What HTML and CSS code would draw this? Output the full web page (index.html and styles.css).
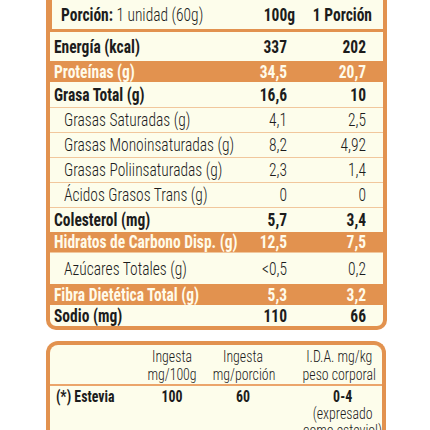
FILE: index.html
```html
<!DOCTYPE html>
<html lang="es">
<head>
  <meta charset="UTF-8">
  <title>Información Nutricional</title>
  <link rel="stylesheet" href="styles.css">
</head>
<body>

<div class="tabla">
  <div class="fila cabecera">
    <div><strong>Porción:</strong> 1 unidad (60g)</div>
    <div class="num">100g</div>
    <div class="num">1 Porción</div>
  </div>

  <div class="fila negrita alta">
    <div>Energía (kcal)</div><div class="num">337</div><div class="num">202</div>
  </div>
  <div class="fila naranja">
    <div>Proteínas (g)</div><div class="num">34,5</div><div class="num">20,7</div>
  </div>
  <div class="fila negrita">
    <div>Grasa Total (g)</div><div class="num">16,6</div><div class="num">10</div>
  </div>
  <div class="fila sub">
    <div>Grasas Saturadas (g)</div><div class="num">4,1</div><div class="num">2,5</div>
  </div>
  <div class="fila sub">
    <div>Grasas Monoinsaturadas (g)</div><div class="num">8,2</div><div class="num">4,92</div>
  </div>
  <div class="fila sub">
    <div>Grasas Poliinsaturadas (g)</div><div class="num">2,3</div><div class="num">1,4</div>
  </div>
  <div class="fila sub">
    <div>Ácidos Grasos Trans (g)</div><div class="num">0</div><div class="num">0</div>
  </div>
  <div class="fila negrita">
    <div>Colesterol (mg)</div><div class="num">5,7</div><div class="num">3,4</div>
  </div>
  <div class="fila naranja baja">
    <div>Hidratos de Carbono Disp. (g)</div><div class="num">12,5</div><div class="num">7,5</div>
  </div>
  <div class="fila sub ancha">
    <div>Azúcares Totales (g)</div><div class="num">&lt;0,5</div><div class="num">0,2</div>
  </div>
  <div class="fila naranja">
    <div>Fibra Dietética Total (g)</div><div class="num">5,3</div><div class="num">3,2</div>
  </div>
  <div class="fila negrita ultima">
    <div>Sodio (mg)</div><div class="num">110</div><div class="num">66</div>
  </div>
</div>

<div class="edulcorante">
  <div class="ed-cabecera">
    <div></div>
    <div>Ingesta<br>mg/100g</div>
    <div>Ingesta<br>mg/porción</div>
    <div class="ida">I.D.A. mg/kg<br>peso corporal</div>
  </div>
  <div class="ed-fila">
    <div class="nombre">(*) Estevia</div>
    <div><strong>100</strong></div>
    <div><strong>60</strong></div>
    <div class="ida"><strong>0-4</strong><br>(expresado<br>como esteviol)</div>
  </div>
</div>

</body>
</html>
```
FILE: styles.css
```css
* {
  box-sizing: border-box;
}
html {
  overflow: hidden;
}
body {
  margin: 0;
  background: #ffffff;
  font-family: "Roboto", "Liberation Sans", sans-serif;
  font-stretch: condensed;
  font-size: 18px;
  font-weight: 300;
  color: #1c1c1c;
}
strong {
  font-weight: 700;
}

/* tabla nutricional */
.tabla {
  margin: -6px 0 0 46px;
  width: 341px;
  border: 4px solid #e2924f;
  border-radius: 0 0 10px 10px;
  background-color: #fdfdeb;
  overflow: hidden;
}
.fila {
  display: grid;
  grid-template-columns: minmax(0, 1fr) 60px 79px;
  align-items: center;
  height: 25px;
  padding: 0 17px 0 4px;
  white-space: nowrap;
}
/* letra condensada */
.fila > div {
  transform: scaleX(0.86);
  transform-origin: left center;
  line-height: 20px;
}
.fila > .num {
  text-align: right;
  transform-origin: right center;
}
.cabecera {
  height: 34px;
  padding: 2px 11px 0 9px;
  grid-template-columns: minmax(0, 1fr) 60px 77px;
  border-left: 2px solid #e2924f;
  border-bottom: 3px solid #e2924f;
  font-weight: 700;
}
.cabecera > div:first-child {
  font-weight: 300;
}
.negrita {
  font-weight: 700;
}
.alta {
  height: 29px;
}
.naranja {
  height: 21px;
  background-color: #e2924f;
  color: #fffbea;
  font-weight: 700;
}
.baja {
  height: 20px;
}
.sub {
  padding-left: 14px;
  border-top: 1px solid #f1c79c;
}
.sub + .negrita {
  border-top: 1px solid #f1c79c;
}
.ancha {
  height: 32px;
}
.ultima {
  height: 21px;
}

/* cuadro del edulcorante */
.edulcorante {
  margin: 11px 0 0 46px;
  width: 340px;
  height: 110px;
  border: 4px solid #e2924f;
  border-bottom: none;
  border-radius: 12px 12px 0 0;
  background-color: #fdfdeb;
  font-size: 16.5px;
}
.ed-cabecera,
.ed-fila {
  display: grid;
  grid-template-columns: 87px 70px 72px 1fr;
  text-align: center;
  white-space: nowrap;
}
.ed-cabecera > div,
.ed-fila > div {
  transform: scaleX(0.84);
}
.ed-cabecera {
  padding-top: 3px;
  line-height: 18px;
  border-bottom: 2px solid #eba56b;
}
.ed-fila {
  padding-top: 2px;
  line-height: 17px;
}
.ida {
  padding-left: 18px;
}
.ed-fila .nombre {
  text-align: left;
  padding-left: 7px;
  font-weight: 700;
  transform-origin: left center;
}
```
